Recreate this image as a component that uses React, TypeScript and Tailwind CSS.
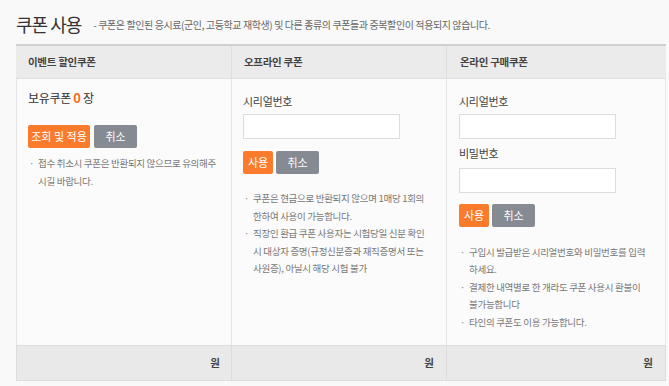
import React from "react";

const font = { fontFamily: '"Noto Sans CJK KR", "Noto Sans", sans-serif' };

function Bullet({ lines }: { lines: string[] }) {
  return (
    <li className="flex">
      <span className="w-[9px] shrink-0 text-[#888]">·</span>
      <span className="flex flex-col">
        {lines.map((l, i) => (
          <span key={i} className="whitespace-nowrap">
            {l}
          </span>
        ))}
      </span>
    </li>
  );
}

function Btn({ orange, children, w }: { orange?: boolean; children: React.ReactNode; w: string }) {
  return (
    <button
      className={
        (orange ? "bg-[#fb7b2d] " : "bg-[#868a93] ") +
        w +
        " h-[23px] rounded-[2px] text-[11px] text-white leading-none flex items-center justify-center"
      }
    >
      {children}
    </button>
  );
}

export default function App() {
  return (
    <div style={font} className="w-[669px] h-[386px] bg-[#f9f9f9] text-[#333] overflow-hidden">
      <div className="flex items-end pl-[16px] pt-[9px] h-[36px]">
        <span className="text-[18px] leading-[24px] font-normal tracking-[-1px] text-[#333]">쿠폰 사용</span>
        <span className="ml-[12px] mb-[4px] text-[10px] leading-[14px] tracking-[-0.4px] text-[#666]">
          - 쿠폰은 할인된 응시료(군인, 고등학교 재학생) 및 다른 종류의 쿠폰들과 중복할인이 적용되지 않습니다.
        </span>
      </div>

      <div className="ml-[16px] mt-[8px] w-[650px] border-t-2 border-[#cfcfcf]">
        {/* header */}
        <div className="flex h-[33px] bg-[#ebebeb] border-b border-[#e0e0e0] text-[10.5px] font-bold tracking-[-0.3px] text-[#444]">
          <div className="w-[216px] pl-[12px] flex items-center border-r border-[#dedede]">이벤트 할인쿠폰</div>
          <div className="w-[215px] pl-[12px] flex items-center border-r border-[#dedede]">오프라인 쿠폰</div>
          <div className="flex-1 pl-[13px] flex items-center">온라인 구매쿠폰</div>
        </div>

        {/* body */}
        <div className="flex h-[266px] bg-[#fbfbfb] border-l border-r border-[#e6e6e6]">
          <div className="w-[215px] border-r border-[#e6e6e6] pl-[11px] pt-[9px]">
            <div className="text-[12px] leading-[20px] tracking-[-0.3px] text-[#333]">
              보유쿠폰 <span className="text-[#ff6a13] font-bold text-[13px]">0</span> 장
            </div>
            <div className="flex gap-[4px] mt-[17px]">
              <Btn orange w="w-[62px]">조회 및 적용</Btn>
              <Btn w="w-[43px]">취소</Btn>
            </div>
            <ul className="mt-[6px] ml-[1px] text-[9.5px] leading-[18px] tracking-[-0.3px] text-[#777]">
              <Bullet lines={["접수 취소시 쿠폰은 반환되지 않으므로 유의해주", "시길 바랍니다."]} />
            </ul>
          </div>

          <div className="w-[215px] border-r border-[#e6e6e6] pl-[11px] pt-[13px]">
            <div className="text-[11px] leading-[18px] tracking-[-0.3px] text-[#444]">시리얼번호</div>
            <div className="mt-[4px] w-[157px] h-[25px] bg-white border border-[#dcdcdc]" />
            <div className="flex gap-[3px] mt-[12px]">
              <Btn orange w="w-[30px]">사용</Btn>
              <Btn w="w-[43px]">취소</Btn>
            </div>
            <ul className="mt-[16px] ml-[1px] text-[9.5px] leading-[17.5px] tracking-[-0.3px] text-[#777]">
              <Bullet lines={["쿠폰은 현금으로 반환되지 않으며 1매당 1회의", "한하여 사용이 가능합니다."]} />
              <Bullet
                lines={[
                  "직장인 환급 쿠폰 사용자는 시험당일 신분 확인",
                  "시 대상자 증명(규정신분증과 재직증명서 또는",
                  "사원증), 아닐시 해당 시험 불가",
                ]}
              />
            </ul>
          </div>

          <div className="flex-1 pl-[12px] pt-[13px]">
            <div className="text-[11px] leading-[18px] tracking-[-0.3px] text-[#444]">시리얼번호</div>
            <div className="mt-[4px] w-[157px] h-[25px] bg-white border border-[#dcdcdc]" />
            <div className="mt-[5px] text-[11px] leading-[18px] tracking-[-0.3px] text-[#444]">비밀번호</div>
            <div className="mt-[6px] w-[157px] h-[25px] bg-white border border-[#dcdcdc]" />
            <div className="flex gap-[3px] mt-[11px]">
              <Btn orange w="w-[30px]">사용</Btn>
              <Btn w="w-[43px]">취소</Btn>
            </div>
            <ul className="mt-[17px] ml-[1px] text-[9.5px] leading-[17px] tracking-[-0.3px] text-[#777] flex flex-col gap-[1px]">
              <Bullet lines={["구입시 발급받은 시리얼번호와 비밀번호를 입력", "하세요."]} />
              <Bullet lines={["결제한 내역별로 한 개라도 쿠폰 사용시 환불이", "불가능합니다"]} />
              <Bullet lines={["타인의 쿠폰도 이용 가능합니다."]} />
            </ul>
          </div>
        </div>

        {/* footer */}
        <div className="flex h-[36px] bg-[#e9e9e9] border border-[#dcdcdc] text-[10.5px] font-bold text-[#444]">
          <div className="w-[215px] pr-[11px] flex items-center justify-end border-r border-[#dcdcdc]">원</div>
          <div className="w-[215px] pr-[12px] flex items-center justify-end border-r border-[#dcdcdc]">원</div>
          <div className="flex-1 pr-[12px] flex items-center justify-end">원</div>
        </div>
      </div>
    </div>
  );
}
